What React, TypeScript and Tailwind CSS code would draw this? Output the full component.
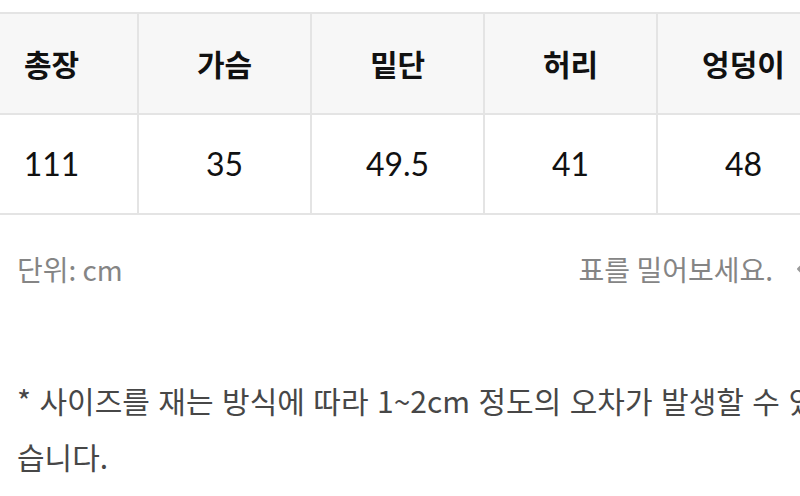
import React from 'react';

const headers = ['총장', '가슴', '밑단', '허리', '엉덩이'];
const values = ['111', '35', '49.5', '41', '48'];

export default function App() {
  return (
    <div className="w-[800px] h-[496px] overflow-hidden bg-white font-['Noto_Sans_CJK_KR',sans-serif]">
      <div className="w-[833px]">
        <div className="pt-[12px] overflow-hidden">
          <table className="ml-[-36px] table-fixed border-collapse w-[865px]">
            <thead>
              <tr>
                {headers.map((h) => (
                  <th
                    key={h}
                    className="w-[173px] h-[101px] border-2 border-[#e4e4e4] bg-[#f7f7f7] text-center text-[30px] font-bold text-[#111]">
                    {h}
                  </th>
                ))}
              </tr>
            </thead>
            <tbody>
              <tr>
                {values.map((v) => (
                  <td
                    key={v}
                    className="h-[100px] border-2 border-[#e4e4e4] text-center text-[32px] text-[#111] font-['Lato','Noto_Sans_CJK_KR',sans-serif]">
                    {v}
                  </td>
                ))}
              </tr>
            </tbody>
          </table>
        </div>

        <div className="flex items-center justify-between pl-[17px] pr-[14px] mt-[33px] text-[28px] text-[#858585]">
          <span>단위: cm</span>
          <span className="flex items-center">
            표를 밀어보세요.
            <svg width="22" height="22" viewBox="0 0 22 22" className="ml-[24px]" fill="none" stroke="#9a9a9a" strokeWidth="2" strokeLinecap="round">
              <path d="M1 11h20M1 11l6-6M1 11l6 6" />
            </svg>
          </span>
        </div>

        <p className="px-[17px] mt-[82px] text-[30px] leading-[56px] text-justify text-[#474747]">
          * 사이즈를 재는 방식에 따라 1~2cm 정도의 오차가 발생할 수 있습니다.
        </p>
      </div>
    </div>
  );
}
